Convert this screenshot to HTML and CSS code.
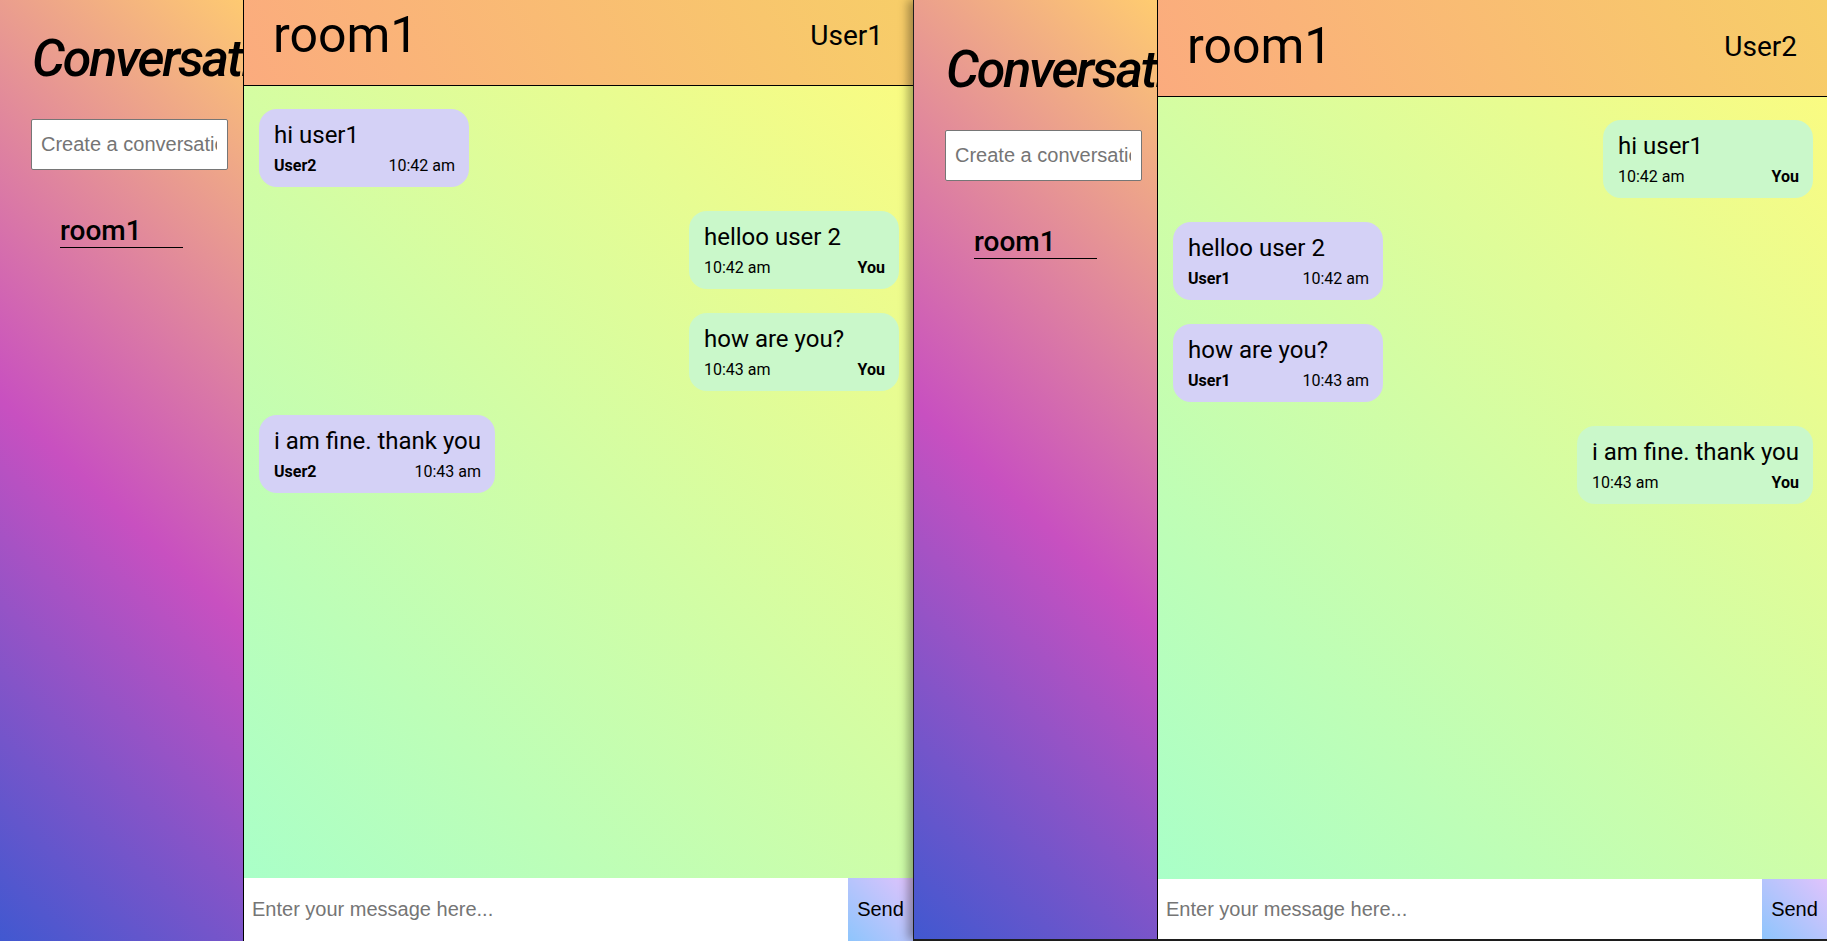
FILE: index.html
```html
<!DOCTYPE html>
<html lang="en">
<head>
<meta charset="utf-8">
<title>Chat rooms</title>
<link rel="stylesheet" href="styles.css">
</head>
<body>
<div class="desk">
  <section class="window window--back">
    <div class="app">
      <aside class="sidebar">
        <h1 class="sidebar-title">Conversations</h1>
        <input class="room-input" type="text" placeholder="Create a conversation">
        <ul class="room-list"><li class="room-item">room1</li></ul>
      </aside>
      <main class="chat">
        <header class="chat-header">
          <h2 class="chat-title">room1</h2>
          <span class="chat-user">User1</span>
        </header>
        <div class="messages">
          <div class="msg msg--in"><p class="msg-text">hi user1</p><div class="msg-meta"><span class="msg-author">User2</span><span class="msg-time">10:42 am</span></div></div>
          <div class="msg msg--out"><p class="msg-text">helloo user 2</p><div class="msg-meta"><span class="msg-time">10:42 am</span><span class="msg-author">You</span></div></div>
          <div class="msg msg--out"><p class="msg-text">how are you?</p><div class="msg-meta"><span class="msg-time">10:43 am</span><span class="msg-author">You</span></div></div>
          <div class="msg msg--in"><p class="msg-text">i am fine. thank you</p><div class="msg-meta"><span class="msg-author">User2</span><span class="msg-time">10:43 am</span></div></div>
        </div>
        <form class="composer">
          <input class="composer-input" type="text" placeholder="Enter your message here...">
          <button class="composer-send" type="button">Send</button>
        </form>
      </main>
    </div>
  </section>

  <section class="window window--front">
    <div class="app">
      <aside class="sidebar">
        <h1 class="sidebar-title">Conversations</h1>
        <input class="room-input" type="text" placeholder="Create a conversation">
        <ul class="room-list"><li class="room-item">room1</li></ul>
      </aside>
      <main class="chat">
        <header class="chat-header">
          <h2 class="chat-title">room1</h2>
          <span class="chat-user">User2</span>
        </header>
        <div class="messages">
          <div class="msg msg--out"><p class="msg-text">hi user1</p><div class="msg-meta"><span class="msg-time">10:42 am</span><span class="msg-author">You</span></div></div>
          <div class="msg msg--in"><p class="msg-text">helloo user 2</p><div class="msg-meta"><span class="msg-author">User1</span><span class="msg-time">10:42 am</span></div></div>
          <div class="msg msg--in"><p class="msg-text">how are you?</p><div class="msg-meta"><span class="msg-author">User1</span><span class="msg-time">10:43 am</span></div></div>
          <div class="msg msg--out"><p class="msg-text">i am fine. thank you</p><div class="msg-meta"><span class="msg-time">10:43 am</span><span class="msg-author">You</span></div></div>
        </div>
        <form class="composer">
          <input class="composer-input" type="text" placeholder="Enter your message here...">
          <button class="composer-send" type="button">Send</button>
        </form>
      </main>
    </div>
  </section>
</div>
</body>
</html>
```

FILE: styles.css
```css
html, body {
  margin: 0;
  padding: 0;
  height: 941px;
  overflow: hidden;
  font-family: Roboto, "Noto Sans", sans-serif;
  color: #000;
}

.desk {
  display: flex;
  height: 941px;
  background: #222;
}

.window {
  overflow: hidden;
  flex: none;
}

.window--back {
  width: 913px;
  height: 941px;
  --bar-h: 63px;
}

.window--back .app {
  margin-top: -11px;
  height: 952px;
}

.window--front {
  width: 914px;
  height: 940px;
  box-sizing: border-box;
  border-left: 1px solid #1e1e1e;
  border-bottom: 1px solid #1e1e1e;
  position: relative;
  z-index: 1;
  box-shadow: -5px 0 9px rgba(0, 0, 0, 0.35);
  --bar-h: 60px;
}

.window--front .app {
  height: 939px;
}

.app {
  display: grid;
  grid-template-columns: 244px 1fr;
}

/* Sidebar */
.sidebar {
  box-sizing: border-box;
  border-right: 1px solid #000;
  overflow: hidden;
  background: linear-gradient(43deg, #4158D0 0%, #C850C0 46%, #FFCC70 100%);
}

.sidebar-title {
  margin: 39px 0 0 32px;
  font-family: Roboto, sans-serif;
  font-style: italic;
  font-weight: 500;
  font-size: 52px;
  letter-spacing: -2.2px;
  line-height: normal;
  white-space: nowrap;
}

.room-input {
  display: block;
  box-sizing: border-box;
  margin: 30px 0 0 31px;
  width: 197px;
  height: 51px;
  padding: 0 10px 0 9px;
  border: 1px solid #767676;
  border-radius: 2px;
  background: #fff;
  font-family: "Liberation Sans", Arial, sans-serif;
  font-size: 20px;
}

.room-input::placeholder,
.composer-input::placeholder {
  color: #757575;
}

.room-list {
  list-style: none;
  margin: 44px 0 0 60px;
  padding: 0;
}

.room-item {
  width: 123px;
  font-size: 28px;
  font-weight: 500;
  line-height: normal;
  border-bottom: 1px solid #000;
}

/* Chat */
.chat {
  display: flex;
  flex-direction: column;
  min-width: 0;
  background: linear-gradient(45deg, #a6ffcb 0%, #fffb7d 100%);
}

.chat-header {
  flex: none;
  box-sizing: border-box;
  height: 97px;
  border-bottom: 1px solid #000;
  display: flex;
  align-items: center;
  justify-content: space-between;
  padding: 0 30px 4px 29px;
  background: linear-gradient(62deg, #FBAB7E 0%, #F7CE68 100%);
}

.chat-title {
  margin: 0;
  font-size: 50px;
  font-weight: 400;
  line-height: normal;
}

.chat-user {
  font-size: 28px;
  font-weight: 400;
}

.messages {
  flex: 1;
  display: flex;
  flex-direction: column;
  align-items: flex-start;
  gap: 24px;
  padding: 23px 14px 0 15px;
}

.msg {
  box-sizing: border-box;
  min-width: 210px;
  padding: 12px 14px 12px 15px;
  border-radius: 18px;
}

.msg--in {
  background: #d4d1f6;
}

.msg--out {
  background: #caf8ca;
  align-self: flex-end;
}

.msg-text {
  margin: 0;
  font-size: 24px;
  line-height: 28px;
}

.msg-meta {
  display: flex;
  justify-content: space-between;
  margin-top: 7px;
  font-size: 16px;
  line-height: 19px;
}

.msg-author {
  font-weight: 700;
}

/* Composer */
.composer {
  flex: none;
  display: flex;
  height: var(--bar-h);
  margin: 0;
  background: #fff;
}

.composer-input {
  flex: 1;
  min-width: 0;
  border: none;
  outline: none;
  padding: 0 8px;
  background: #fff;
  font-family: "Liberation Sans", Arial, sans-serif;
  font-size: 20px;
}

.composer-send {
  flex: none;
  width: 65px;
  border: none;
  padding: 0;
  background: linear-gradient(45deg, #8EC5FC 0%, #E0C3FC 100%);
  font-family: "Liberation Sans", Arial, sans-serif;
  font-size: 20px;
  color: #000;
}
```
